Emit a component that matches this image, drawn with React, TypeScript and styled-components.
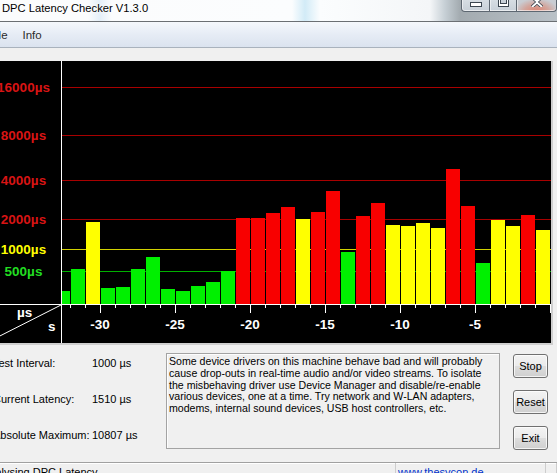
import React from 'react';
import styled, { createGlobalStyle } from 'styled-components';

const GlobalStyle = createGlobalStyle`
  html, body {
    margin: 0;
    padding: 0;
    background: #f0f0f0;
    overflow: hidden;
  }
  body {
    width: 557px;
    height: 473px;
    font-family: "Liberation Sans", Arial, sans-serif;
  }
`;

// the window is wider than the shot: its left edge lies off screen
const Window = styled.div`
  margin-left: -14px;
  width: 571px;
  height: 473px;
  overflow: hidden;
  background: #f0f0f0;
  display: flex;
  flex-direction: column;
`;

const TitleBar = styled.div`
  height: 21px;
  flex: none;
  display: flex;
  align-items: flex-start;
  border-bottom: 1px solid #6b6f73;
  background: linear-gradient(
    90deg,
    #fbfcfd 0px,
    #fbfcfd 102px,
    #e4eff8 114px,
    #fbfcfd 126px,
    #fbfdfe 306px,
    #d2ebf7 319px,
    #fbfdfe 334px,
    #f4f6f8 444px,
    #c6cfd5 459px,
    #a3abb0 474px,
    #b9c1c7 571px
  );
`;

const TitleText = styled.div`
  padding-left: 16px;
  line-height: 16px;
  font-size: 11.2px;
  color: #000;
  text-shadow: 0 0 6px #fff, 0 0 3px #fff;
  white-space: nowrap;
`;

const CaptionButtons = styled.div`
  margin-left: auto;
  display: flex;
`;

const CaptionButton = styled.div<{ $width: number; $close?: boolean }>`
  width: ${({ $width }) => $width}px;
  height: 12px;
  box-sizing: border-box;
  border: 1px solid #5d6771;
  border-top: none;
  border-left-width: 0;
  display: flex;
  align-items: flex-end;
  justify-content: center;
  padding-bottom: 4px;
  background: ${({ $close }) =>
    $close
      ? 'radial-gradient(ellipse at 50% 110%, #e0826e 0%, #d2a59c 45%, #c9cdd3 80%)'
      : 'linear-gradient(#d6dde3, #c8d0d8)'};
  box-shadow: inset 0 -1px 0 rgba(255, 255, 255, 0.6), inset 1px 0 0 rgba(255, 255, 255, 0.5);

  &:first-child {
    border-left-width: 1px;
    border-bottom-left-radius: 4px;
  }
  &:last-child {
    border-bottom-right-radius: 4px;
  }
`;

const MenuBar = styled.div`
  height: 25px;
  flex: none;
  display: flex;
  align-items: center;
  gap: 15px;
  padding-left: 3px;
  border-bottom: 1px solid #a9b2bd;
  background: linear-gradient(#f5f8fc 0%, #e6ecf5 50%, #dbe3ef 100%);
`;

const MenuItem = styled.span`
  font-size: 11.5px;
  color: #2b2b2b;
`;

const ToolStrip = styled.div`
  height: 13px;
  flex: none;
`;

const ChartFrame = styled.div`
  width: 565px;
  height: 282px;
  flex: none;
  background: #000;
  border-right: 2px solid #cfcfcf;
  border-bottom: 2px solid #cfcfcf;

  svg {
    display: block;
  }
`;

const ChartText = styled.text<{ $color?: string }>`
  font-family: "Liberation Sans", Arial, sans-serif;
  font-weight: bold;
  font-size: 13.5px;
  fill: ${({ $color }) => $color || '#fff'};
`;

const InfoPanel = styled.div`
  height: 117px;
  flex: none;
  box-sizing: border-box;
  padding-top: 8px;
  display: flex;
  align-items: flex-start;
`;

const StatsColumn = styled.div`
  width: 180px;
  box-sizing: border-box;
  padding: 3px 0 0 7px;
  display: flex;
  flex-direction: column;
  gap: 22px;
`;

const StatRow = styled.div`
  display: grid;
  grid-template-columns: 99px auto;
  line-height: 14px;
  font-size: 11px;
  color: #000;
  white-space: nowrap;
`;

const MessageBox = styled.div`
  width: 334px;
  height: 96px;
  box-sizing: border-box;
  border: 1px solid #a3a3a3;
  box-shadow: inset 1px 1px 0 #fdfdfd;
  padding: 2px 2px;
  font-size: 10.6px;
  line-height: 11.75px;
  color: #000;
  white-space: nowrap;
`;

const ButtonColumn = styled.div`
  margin-left: 13px;
  padding-top: 1px;
  display: flex;
  flex-direction: column;
  gap: 12px;
`;

const Button = styled.div`
  width: 35px;
  height: 24px;
  box-sizing: border-box;
  border: 1px solid #707070;
  border-radius: 3px;
  display: flex;
  align-items: center;
  justify-content: center;
  font-size: 11px;
  color: #000;
  background: linear-gradient(#f3f3f3 0%, #ebebeb 48%, #dddddd 52%, #cfcfcf 100%);
  box-shadow: inset 0 0 0 1px rgba(255, 255, 255, 0.75);
`;

const StatusBar = styled.div`
  flex: 1;
  display: flex;
  border-top: 1px solid #a0a0a0;
  box-shadow: inset 0 1px 0 #fff;
  font-size: 11px;
`;

const StatusPanel = styled.div<{ $width?: number }>`
  width: ${({ $width }) => ($width ? `${$width}px` : 'auto')};
  flex: ${({ $width }) => ($width ? 'none' : '1')};
  box-sizing: border-box;
  padding: 3px 0 0 2px;
  border-right: 1px solid #cdcdcd;
  white-space: nowrap;
  overflow: hidden;
`;

const StatusText = styled.span`
  margin-left: -6px;
  color: #000;
`;

const StatusLink = styled.span`
  color: #0033cc;
`;

// chart coordinates are in screen pixels: x from -14, y from 61
const AXIS_X = 61;
const AXIS_Y = 304;
const PLOT_RIGHT = 551;

const gridLines = [
  { y: 87, line: '#a80000', text: '#d81414', label: '16000µs' },
  { y: 135, line: '#a80000', text: '#d81414', label: '8000µs' },
  { y: 180, line: '#a80000', text: '#d81414', label: '4000µs' },
  { y: 219, line: '#a80000', text: '#d81414', label: '2000µs' },
  { y: 249, line: '#d2d200', text: '#ffff00', label: '1000µs' },
  { y: 271, line: '#00b000', text: '#22dd22', label: '500µs' },
];

const barColors: Record<string, string> = { g: '#00f000', y: '#ffff00', r: '#f80000' };

// top edge of each one-second bar, and its colour
const bars: [number, string][] = [
  [291, 'g'], [269, 'g'], [222, 'y'], [288, 'g'], [287, 'g'], [269, 'g'],
  [257, 'g'], [289, 'g'], [291, 'g'], [286, 'g'], [282, 'g'], [271, 'g'],
  [218, 'r'], [218, 'r'], [213, 'r'], [207, 'r'], [219, 'y'], [212, 'r'],
  [191, 'r'], [252, 'g'], [216, 'r'], [203, 'r'], [225, 'y'], [226, 'y'],
  [223, 'y'], [228, 'y'], [169, 'r'], [206, 'r'], [263, 'g'], [220, 'y'],
  [226, 'y'], [215, 'r'], [230, 'y'],
];

const xLabels = [-30, -25, -20, -15, -10, -5];

const LatencyChart: React.FC = () => {
  const ticks = Array.from({ length: 33 }, (_, k) => 70 + 15 * k);
  return (
    <svg width={565} height={282} viewBox="-14 61 565 282">
      {gridLines.map((g) => (
        <g key={g.label}>
          <line
            x1={AXIS_X}
            x2={PLOT_RIGHT}
            y1={g.y + 0.5}
            y2={g.y + 0.5}
            stroke={g.line}
            shapeRendering="crispEdges"
          />
          <ChartText x={23.5} y={g.y + 5} textAnchor="middle" $color={g.text}>
            {g.label}
          </ChartText>
        </g>
      ))}
      {bars.map(([top, c], j) => {
        const x = Math.max(AXIS_X + 1, 56 + 15 * j);
        const right = 70 + 15 * j;
        return (
          <rect
            key={j}
            x={x}
            y={top}
            width={right - x}
            height={AXIS_Y - top}
            fill={barColors[c]}
            shapeRendering="crispEdges"
          />
        );
      })}
      <line x1={AXIS_X + 0.5} x2={AXIS_X + 0.5} y1={61} y2={343} stroke="#fff" shapeRendering="crispEdges" />
      <line x1={-14} x2={PLOT_RIGHT} y1={AXIS_Y + 0.5} y2={AXIS_Y + 0.5} stroke="#fff" shapeRendering="crispEdges" />
      {ticks.map((t) => (
        <line
          key={t}
          x1={t + 0.5}
          x2={t + 0.5}
          y1={AXIS_Y + 1}
          y2={(t - 100) % 75 === 0 ? AXIS_Y + 9 : AXIS_Y + 4}
          stroke="#fff"
          shapeRendering="crispEdges"
        />
      ))}
      {xLabels.map((v) => (
        <ChartText key={v} x={100 + (v + 30) * 15} y={329} textAnchor="middle">
          {v}
        </ChartText>
      ))}
      <line x1={-14} y1={343} x2={AXIS_X} y2={AXIS_Y + 1} stroke="#fff" />
      <ChartText x={17} y={317}>µs</ChartText>
      <ChartText x={48} y={331}>s</ChartText>
    </svg>
  );
};

const stats = [
  { label: 'Test Interval:', value: '1000 µs' },
  { label: 'Current Latency:', value: '1510 µs' },
  { label: 'Absolute Maximum:', value: '10807 µs' },
];

const messageLines = [
  'Some device drivers on this machine behave bad and will probably',
  'cause drop-outs in real-time audio and/or video streams. To isolate',
  'the misbehaving driver use Device Manager and disable/re-enable',
  'various devices, one at a time. Try network and W-LAN adapters,',
  'modems, internal sound devices, USB host controllers, etc.',
];

export default function App() {
  return (
    <>
      <GlobalStyle />
      <Window>
        <TitleBar>
          <TitleText>DPC Latency Checker V1.3.0</TitleText>
          <CaptionButtons>
            <CaptionButton $width={29}>
              <svg width={12} height={5} viewBox="0 0 12 5">
                <rect x={0.5} y={0.5} width={11} height={4} fill="#fff" stroke="#3c4650" />
              </svg>
            </CaptionButton>
            <CaptionButton $width={27}>
              <svg width={11} height={8} viewBox="0 0 11 8">
                <rect x={0.5} y={-2} width={10} height={9.5} fill="#fff" stroke="#3c4650" />
                <rect x={2.5} y={0} width={6} height={4.5} fill="#c8d0d8" stroke="#3c4650" />
              </svg>
            </CaptionButton>
            <CaptionButton $width={40} $close>
              <svg width={12} height={8} viewBox="0 0 12 8">
                <path d="M1 -2 L6 2.5 L11 -2 M1 8 L6 3.5 L11 8" stroke="#3c4650" strokeWidth={3.4} fill="none" />
                <path d="M1 -2 L6 2.5 L11 -2 M1 8 L6 3.5 L11 8" stroke="#fff" strokeWidth={1.8} fill="none" />
              </svg>
            </CaptionButton>
          </CaptionButtons>
        </TitleBar>

        <MenuBar>
          <MenuItem>File</MenuItem>
          <MenuItem>Info</MenuItem>
        </MenuBar>

        <ToolStrip />

        <ChartFrame>
          <LatencyChart />
        </ChartFrame>

        <InfoPanel>
          <StatsColumn>
            {stats.map((s) => (
              <StatRow key={s.label}>
                <span>{s.label}</span>
                <span>{s.value}</span>
              </StatRow>
            ))}
          </StatsColumn>
          <MessageBox>
            {messageLines.map((l) => (
              <div key={l}>{l}</div>
            ))}
          </MessageBox>
          <ButtonColumn>
            <Button>Stop</Button>
            <Button>Reset</Button>
            <Button>Exit</Button>
          </ButtonColumn>
        </InfoPanel>

        <StatusBar>
          <StatusPanel $width={410}>
            <StatusText>Analysing DPC Latency...</StatusText>
          </StatusPanel>
          <StatusPanel $width={150}>
            <StatusLink>www.thesycon.de</StatusLink>
          </StatusPanel>
          <StatusPanel />
        </StatusBar>
      </Window>
    </>
  );
}
